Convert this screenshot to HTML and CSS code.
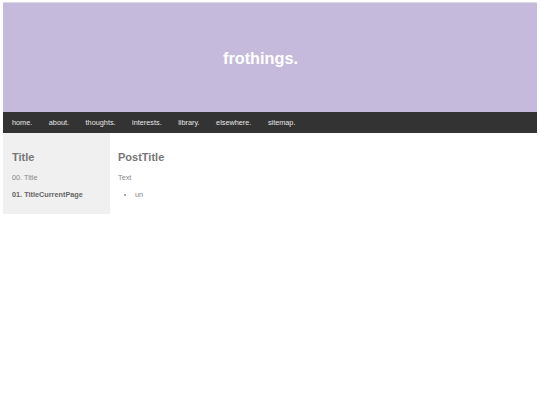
FILE: index.html
```html
<!DOCTYPE html>
<html lang="en">
<head>
    <meta charset="UTF-8">
    <title>frothings.</title>
    <link rel="stylesheet" href="styles.css">
</head>
<body>
    <div class="top">
        <header class="banner">
            <h1>frothings.</h1>
        </header>
        <nav class="menu">
            <a href="#">home.</a>
            <a href="#">about.</a>
            <a href="#">thoughts.</a>
            <a href="#">interests.</a>
            <a href="#">library.</a>
            <a href="#">elsewhere.</a>
            <a href="#">sitemap.</a>
        </nav>
    </div>
    <div class="page">
        <aside class="sidebar">
            <h2>Title</h2>
            <p>00. Title</p>
            <p class="current">01. TitleCurrentPage</p>
        </aside>
        <main class="post">
            <h2>PostTitle</h2>
            <p>Text</p>
            <ul>
                <li>un</li>
            </ul>
        </main>
    </div>
</body>
</html>
```

FILE: styles.css
```css
* {
    box-sizing: border-box;
    margin: 0;
    padding: 0;
}

body {
    margin: 2px 3px;
    font-family: 'Liberation Sans', Arial, sans-serif;
    color: #777;
    background: #fff;
}

.top {
    border: 1px solid #dcdcdc;
    border-bottom: none;
    margin: 0 -1px;
}

.banner {
    height: 109px;
    background-color: #c5badb;
    display: flex;
    align-items: center;
    justify-content: center;
    padding-right: 19px;
}

.banner h1 {
    color: #fff;
    font-size: 16.3px;
    font-weight: bold;
    margin-top: 2px;
}

.menu {
    height: 21px;
    background-color: #333;
    display: flex;
    align-items: center;
    padding-left: 9px;
}

.menu a {
    color: #e6e6e6;
    text-decoration: none;
    font-size: 7.3px;
    margin-right: 16.5px;
}

.page {
    display: flex;
}

.sidebar {
    width: 107px;
    height: 81px;
    background-color: #f0f0f0;
    padding: 17.5px 9px 0;
}

.sidebar h2,
.post h2 {
    font-size: 11px;
    line-height: 13px;
    font-weight: bold;
    color: #777;
    margin-bottom: 9px;
}

.sidebar p,
.post p,
.post li {
    font-size: 7.3px;
    line-height: 9px;
    color: #888;
    margin-bottom: 8px;
}

.sidebar .current {
    font-weight: bold;
    color: #666;
}

.post {
    padding: 17.5px 8px 0;
}

.post ul {
    list-style: disc;
    padding-left: 17px;
}
```
